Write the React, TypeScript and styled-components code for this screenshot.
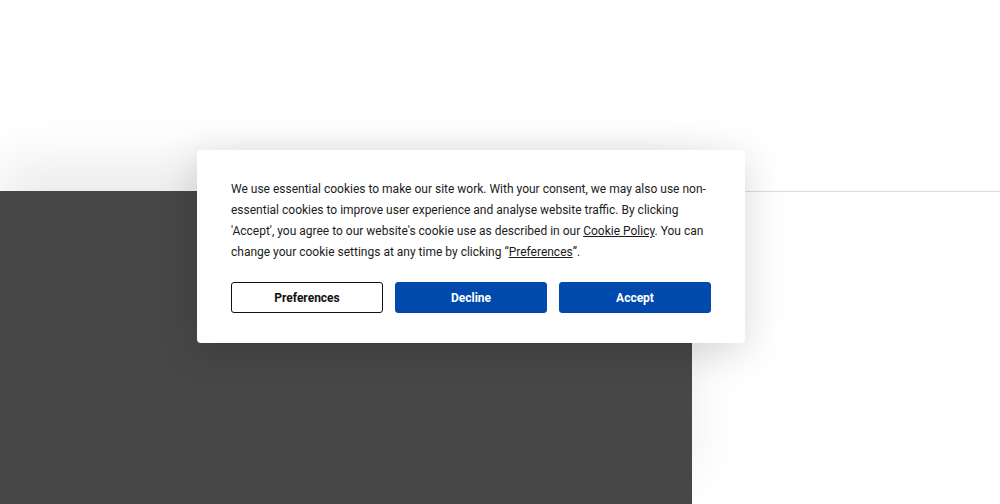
import styled, { createGlobalStyle } from "styled-components";

const GlobalStyle = createGlobalStyle`
  html, body {
    margin: 0;
    padding: 0;
    background: #fff;
    font-family: Roboto, "Liberation Sans", Arial, sans-serif;
  }
`;

const Page = styled.div`
  position: relative;
  width: 1000px;
  height: 504px;
  overflow: hidden;
  background: #fff;
`;

const Top = styled.div`
  height: 191px;
`;

const Hero = styled.div`
  display: flex;
  height: 313px;
`;

const DarkPanel = styled.div`
  width: 692px;
  background: #474747;
  box-shadow: 0 -30px 50px rgba(0, 0, 0, 0.08);
`;

const LightPanel = styled.div`
  flex: 1;
  border-top: 1px solid #dcdcdc;
  box-sizing: border-box;
`;

const Banner = styled.div`
  position: absolute;
  left: 197px;
  top: 150px;
  width: 548px;
  box-sizing: border-box;
  padding: 29px 34px 30px;
  background: #fff;
  border-radius: 4px;
  box-shadow: 0 8px 40px rgba(0, 0, 0, 0.16);
`;

const Message = styled.p`
  margin: 0;
  font-size: 12px;
  line-height: 21px;
  color: #1c1c1c;

  a {
    color: #1c1c1c;
    text-decoration: underline;
  }
`;

const Actions = styled.div`
  display: grid;
  grid-template-columns: repeat(3, 1fr);
  gap: 12px;
  margin-top: 19px;
`;

const Button = styled.button<{ $primary?: boolean }>`
  height: 31px;
  box-sizing: border-box;
  border-radius: 3px;
  font-family: Roboto, "Liberation Sans", Arial, sans-serif;
  font-size: 12px;
  font-weight: 700;
  cursor: pointer;
  border: 1px solid ${(p) => (p.$primary ? "#004aad" : "#111")};
  background: ${(p) => (p.$primary ? "#004aad" : "#fff")};
  color: ${(p) => (p.$primary ? "#fff" : "#111")};
`;

const App = () => {
  return (
    <>
      <GlobalStyle />
      <Page>
        <Top />
        <Hero>
          <DarkPanel />
          <LightPanel />
        </Hero>
        <Banner>
          <Message>
            We use essential cookies to make our site work. With your consent, we
            may also use non-essential cookies to improve user experience and
            analyse website traffic. By clicking 'Accept', you agree to our
            website's cookie use as described in our <a href="#">Cookie Policy</a>.
            You can change your cookie settings at any time by clicking “<a href="#">Preferences</a>”.
          </Message>
          <Actions>
            <Button type="button">Preferences</Button>
            <Button type="button" $primary>
              Decline
            </Button>
            <Button type="button" $primary>
              Accept
            </Button>
          </Actions>
        </Banner>
      </Page>
    </>
  );
};

export default App;
